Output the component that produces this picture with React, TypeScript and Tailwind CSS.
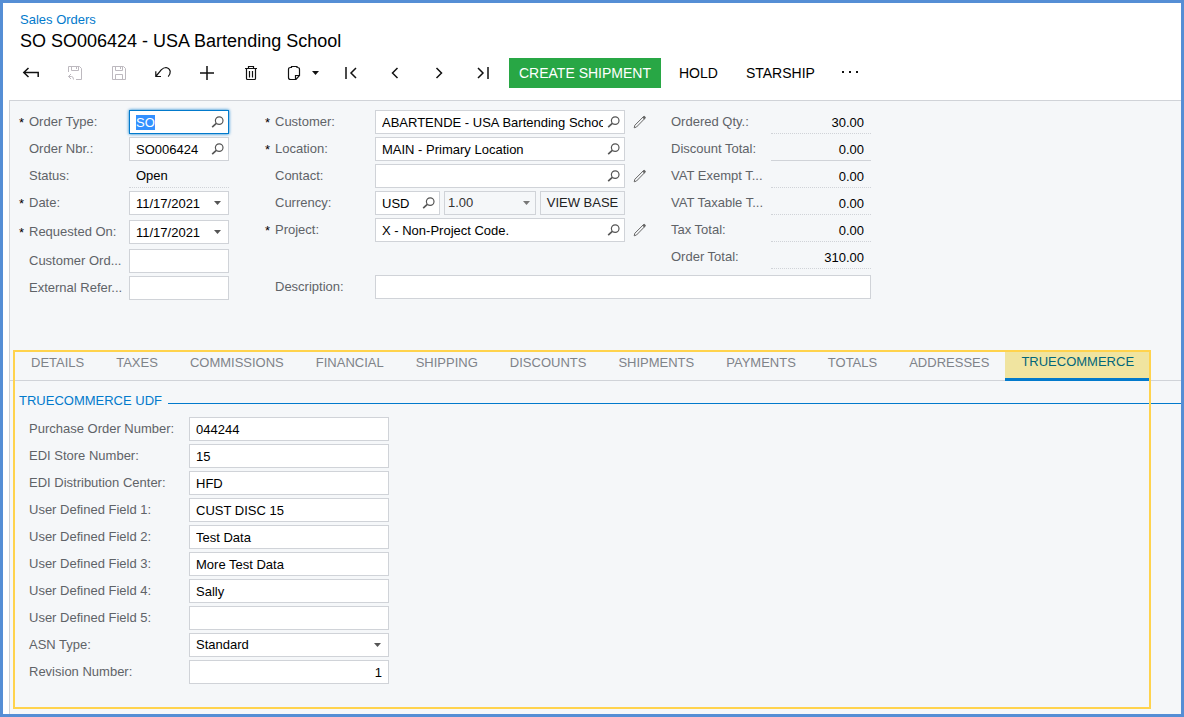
import { useEffect, useRef } from "react";
import type { ReactNode, Ref } from "react";

const box =
  "flex h-6 items-center border border-[#d0d3d8] bg-white text-black focus-within:border-[#027acc] focus-within:shadow-[0_0_3px_#027acc]";
const inputText =
  "h-full min-w-0 flex-1 bg-transparent pt-px pl-1.5 outline-none selection:bg-[#3390ff] selection:text-white";

function SearchIcon() {
  return (
    <svg width="14" height="14" viewBox="0 0 14 14" fill="none" stroke="#555" strokeWidth="1.2">
      <circle cx="8.2" cy="5.6" r="3.800" />
      <path d="M5.300 8.300 1.200 12.200" strokeWidth="1.600" />
    </svg>
  );
}

function CaretIcon({ color = "#555" }: { color?: string }) {
  return (
    <svg width="7" height="4" viewBox="0 0 7 4" fill={color}>
      <path d="M0 0h7L3.5 4z" />
    </svg>
  );
}

function PencilIcon() {
  return (
    <svg width="14" height="14" viewBox="0 0 14 14" fill="none" stroke="#666" strokeWidth="1">
      <path d="M1.200 12.800 1.800 10.300 10.300 1.800q1-.8 1.700-.1t-.1 1.700L3.500 12z" />
      <path d="m9.700 2.100 2 2M10.500 1.500l1.700 1.700" strokeWidth="1.200" />
    </svg>
  );
}

function Label({ id, text, required }: { id: string; text: string; required?: boolean }) {
  return (
    <>
      <span className="w-2.5 shrink-0 pt-0.5 text-black" aria-hidden="true">
        {required ? "*" : ""}
      </span>
      <label htmlFor={id} className="w-25 shrink-0 whitespace-nowrap text-[#5f6368]">
        {text}
      </label>
    </>
  );
}

type FieldProps = {
  id: string;
  label: string;
  value?: string;
  required?: boolean;
  icon?: "search" | "caret";
  edit?: boolean;
  width: string;
  inputRef?: Ref<HTMLInputElement>;
};

function Field({ id, label, value = "", required, icon, edit, width, inputRef }: FieldProps) {
  return (
    <div className="flex h-6 items-center">
      <Label id={id} text={label} required={required} />
      <div className={`${box} ${width}`}>
        <input id={id} ref={inputRef} defaultValue={value} className={inputText} />
        {icon === "search" && (
          <button aria-label={`Look up ${label}`} className="ml-1 mr-[3px] shrink-0">
            <SearchIcon />
          </button>
        )}
        {icon === "caret" && (
          <button aria-label={`Choose ${label}`} className="mr-[7px] shrink-0">
            <CaretIcon />
          </button>
        )}
      </div>
      {edit && (
        <button aria-label={`Edit ${label}`} className="ml-2">
          <PencilIcon />
        </button>
      )}
    </div>
  );
}

function Tool({ label, children, disabled }: { label: string; children: ReactNode; disabled?: boolean }) {
  return (
    <button aria-label={label} disabled={disabled} className="flex h-[30px] w-11 shrink-0 items-center justify-center">
      <svg
        width="18"
        height="18"
        viewBox="0 0 18 18"
        fill="none"
        stroke={disabled ? "#bdb9bf" : "#111"}
        strokeWidth={disabled ? "1" : "1.5"}
      >
        {children}
      </svg>
    </button>
  );
}

const totals = [
  { id: "qty", label: "Ordered Qty.:", value: "30.00" },
  { id: "discount", label: "Discount Total:", value: "0.00", solid: true },
  { id: "exempt", label: "VAT Exempt T...", value: "0.00" },
  { id: "taxable", label: "VAT Taxable T...", value: "0.00" },
  { id: "tax", label: "Tax Total:", value: "0.00" },
  { id: "total", label: "Order Total:", value: "310.00" },
];

const tabs = [
  "DETAILS",
  "TAXES",
  "COMMISSIONS",
  "FINANCIAL",
  "SHIPPING",
  "DISCOUNTS",
  "SHIPMENTS",
  "PAYMENTS",
  "TOTALS",
  "ADDRESSES",
  "TRUECOMMERCE",
];

const customFields = [
  { id: "po", label: "Purchase Order Number:", value: "044244" },
  { id: "store", label: "EDI Store Number:", value: "15" },
  { id: "center", label: "EDI Distribution Center:", value: "HFD" },
  { id: "udf1", label: "User Defined Field 1:", value: "CUST DISC 15" },
  { id: "udf2", label: "User Defined Field 2:", value: "Test Data" },
  { id: "udf3", label: "User Defined Field 3:", value: "More Test Data" },
  { id: "udf4", label: "User Defined Field 4:", value: "Sally" },
  { id: "udf5", label: "User Defined Field 5:", value: "" },
];

function Header() {
  return (
    <header className="bg-white pt-[9px] pb-3">
      <a href="#sales-orders" className="ml-[17px] block w-fit leading-4 text-[#027acc]">
        Sales Orders
      </a>
      <h1 className="mt-px ml-[17px] text-lg leading-6 text-black">SO SO006424 - USA Bartending School</h1>
      <div className="mt-[5px] ml-1.5 flex items-center text-sm text-black">
        <Tool label="Back">
          <path d="M6.5 4 1.8 8.5 6.5 13M2 8.5h14.2V13" />
        </Tool>
        <Tool label="Save and close" disabled>
          <path d="M2.5 8V2.5h11l2 2v11H10M5.5 2.5v4h7v-4M10.5 3v2M2.500 12.500h3q2 0 2 3M5 10l-2.500 2.500L5 15" />
        </Tool>
        <Tool label="Save" disabled>
          <path d="M2.5 2.5h11l2 2v11h-13zM5.5 2.5v4h7v-4M10.5 3v2M5.5 15.5v-5h7v5" />
        </Tool>
        <Tool label="Undo">
          <path
            d="M1.800 7.200v5.300h5.200M2.200 12 7.200 5.900Q9.500 3.500 12 3.500q3.300.4 4.200 3.700.3 2.800-2 5.400"
            strokeWidth="1.2"
          />
        </Tool>
        <Tool label="Add">
          <path d="M9 2v14M2 9h14" />
        </Tool>
        <Tool label="Delete">
          <path d="M3 4.5h12M6.5 4V2.5h5V4M4.5 5v9.5q0 1 1 1h7q1 0 1-1V5M7.5 7v6.5M10.5 7v6.5" strokeWidth="1.2" />
        </Tool>
        <button aria-label="Clipboard" className="flex h-[30px] w-14 shrink-0 items-center gap-2 pl-[13px]">
          <svg width="18" height="18" viewBox="0 0 18 18" fill="none" stroke="#111" strokeWidth="1.2">
            <path d="M6 3.500H4.500q-2 0-2 2v8q0 2 2 2h5.500l3.500-4V5.500q0-2-2-2H11M5.500 4V2.500H11V4M9.500 15.500v-4h4" />
          </svg>
          <CaretIcon color="#111" />
        </button>
        <Tool label="First">
          <path d="M4 3v12M14 4 9 9l5 5" />
        </Tool>
        <Tool label="Previous">
          <path d="M11.500 4 6.500 9l5 5" />
        </Tool>
        <Tool label="Next">
          <path d="m6.500 4 5 5-5 5" />
        </Tool>
        <Tool label="Last">
          <path d="m4 4 5 5-5 5M14 3v12" />
        </Tool>
        <button className="mx-1 h-[30px] bg-[#28a745] px-2.5 whitespace-nowrap text-white">CREATE SHIPMENT</button>
        <button className="h-[30px] px-3.5">HOLD</button>
        <button className="h-[30px] px-3.5">STARSHIP</button>
        <button aria-label="More actions" className="flex h-[30px] items-center px-3">
          <svg width="18" height="4" viewBox="0 0 18 4" fill="#111">
            <path d="M1 0h2v2H1zM8 0h2v2H8zM15 0h2v2h-2z" />
          </svg>
        </button>
      </div>
    </header>
  );
}

function Summary() {
  const orderType = useRef<HTMLInputElement>(null);
  useEffect(() => {
    orderType.current?.focus();
    orderType.current?.select();
  }, []);

  return (
    <div className="flex gap-9 pt-[9px] pl-[9px]">
      <div className="flex flex-col gap-[3px]">
        <Field id="type" label="Order Type:" value="SO" required icon="search" width="w-25" inputRef={orderType} />
        <Field id="nbr" label="Order Nbr.:" value="SO006424" icon="search" width="w-25" />
        <div className="flex h-6 items-center">
          <Label id="status" text="Status:" />
          <output id="status" className="h-6 w-25 border-b border-dotted border-[#d0d3d8] pl-[7px] leading-6 text-black">
            Open
          </output>
        </div>
        <div className="mb-0.5">
          <Field id="date" label="Date:" value="11/17/2021" required icon="caret" width="w-25" />
        </div>
        <div className="mb-0.5">
          <Field id="requested" label="Requested On:" value="11/17/2021" required icon="caret" width="w-25" />
        </div>
        <Field id="custord" label="Customer Ord..." width="w-25" />
        <Field id="extref" label="External Refer..." width="w-25" />
      </div>
      <div>
        <div className="flex">
          <div className="flex w-[406px] flex-col gap-[3px]">
            <Field
              id="customer"
              label="Customer:"
              value="ABARTENDE - USA Bartending School"
              required
              icon="search"
              edit
              width="w-[250px]"
            />
            <Field id="location" label="Location:" value="MAIN - Primary Location" required icon="search" width="w-[250px]" />
            <Field id="contact" label="Contact:" icon="search" edit width="w-[250px]" />
            <div className="flex items-center">
              <Field id="currency" label="Currency:" value="USD" icon="search" width="w-[65px]" />
              <div className="relative ml-1 flex items-center">
                <select
                  aria-label="Rate"
                  className="h-6 w-23 appearance-none border border-[#d0d3d8] bg-transparent pl-[3px] text-[#333]"
                >
                  <option>1.00</option>
                </select>
                <span className="pointer-events-none absolute right-1.5">
                  <CaretIcon color="#777" />
                </span>
              </div>
              <button className="ml-1 h-6 w-[85px] border border-[#d0d3d8] whitespace-nowrap text-[#222]">
                VIEW BASE
              </button>
            </div>
            <Field id="project" label="Project:" value="X - Non-Project Code." required icon="search" edit width="w-[250px]" />
          </div>
          <div className="flex flex-col gap-[3px]">
            {totals.map((t) => (
              <div key={t.id} className="flex h-6 items-center">
                <label htmlFor={t.id} className="w-25 whitespace-nowrap text-[#5f6368]">
                  {t.label}
                </label>
                <output
                  id={t.id}
                  className={`h-6 w-25 border-b border-[#d0d3d8] pt-1 pr-[7px] text-right leading-[18px] text-black ${
                    t.solid ? "border-solid" : "border-dotted"
                  }`}
                >
                  {t.value}
                </output>
              </div>
            ))}
          </div>
        </div>
        <div className="mt-1.5">
          <Field id="description" label="Description:" width="w-[496px]" />
        </div>
      </div>
    </div>
  );
}

function TabPanel() {
  return (
    <section className="relative mt-[50px] pb-[25px]">
      <nav role="tablist" className="flex border-b border-[#d0d3d8] pt-0.5 pl-[5px]">
        {tabs.map((name) =>
          name === "TRUECOMMERCE" ? (
            <button
              key={name}
              role="tab"
              aria-selected="true"
              className="-mb-px h-[29px] border-b-3 border-[#027acc] bg-[#f0e4a0] px-4 pb-1.5 leading-5 text-[#02667a]"
            >
              {name}
            </button>
          ) : (
            <button key={name} role="tab" aria-selected="false" className="h-7 px-4 pb-1.5 leading-5 text-[#7f8389]">
              {name}
            </button>
          ),
        )}
      </nav>
      <div className="flex pt-3 pl-[9px]">
        <h2 className="leading-4 whitespace-nowrap text-[#027acc]">TRUECOMMERCE UDF</h2>
        <div className="ml-1.5 h-[11px] flex-1 border-b border-[#027acc]" />
      </div>
      <div className="mt-2 flex flex-col gap-[3px] pl-[19px]">
        {customFields.map((f) => (
          <div key={f.id} className="flex h-6 items-center">
            <label htmlFor={f.id} className="w-40 text-[#5f6368]">
              {f.label}
            </label>
            <div className={`${box} w-50`}>
              <input id={f.id} defaultValue={f.value} className={inputText} />
            </div>
          </div>
        ))}
        <div className="flex h-6 items-center">
          <label htmlFor="asn" className="w-40 text-[#5f6368]">
            ASN Type:
          </label>
          <div className="relative flex items-center">
            <select
              id="asn"
              className="h-6 w-50 appearance-none border border-[#d0d3d8] bg-white pl-1.5 text-black"
            >
              <option>Standard</option>
            </select>
            <span className="pointer-events-none absolute right-2">
              <CaretIcon />
            </span>
          </div>
        </div>
        <div className="flex h-6 items-center">
          <label htmlFor="revision" className="w-40 text-[#5f6368]">
            Revision Number:
          </label>
          <div className={`${box} w-50`}>
            <input id="revision" defaultValue="1" className={`${inputText} pr-1.5 text-right`} />
          </div>
        </div>
      </div>
      <div className="pointer-events-none absolute inset-y-0 right-[30px] left-[3px] border-2 border-[#ffd34d]" />
    </section>
  );
}

export default function App() {
  return (
    <div className="flex min-h-screen flex-col border-3 border-[#558ed5] bg-white font-['Liberation_Sans',Arial,sans-serif] text-[13px] leading-4">
      <Header />
      <main className="ml-1.5 flex-1 border-t border-l border-[#d0d3d8] bg-[#f5f7f9]">
        <Summary />
        <TabPanel />
      </main>
    </div>
  );
}
